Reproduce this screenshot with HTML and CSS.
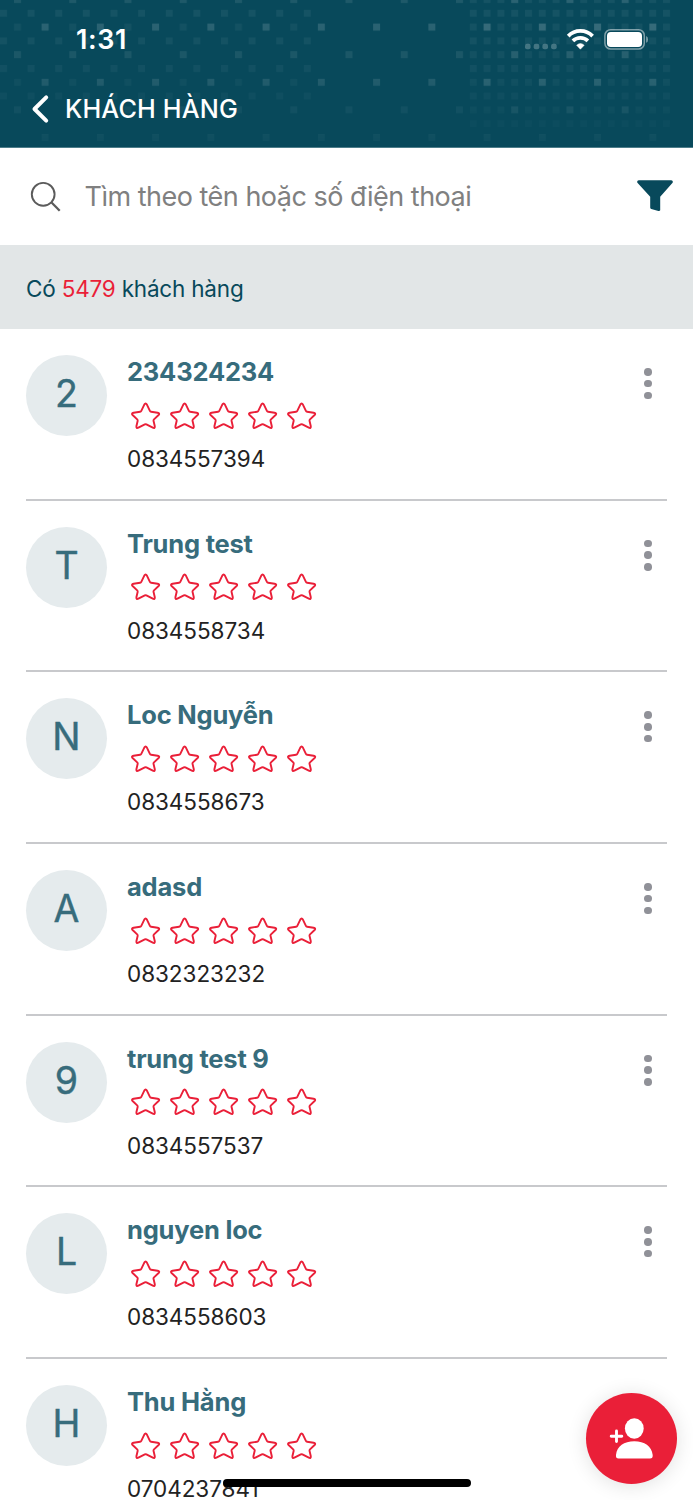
FILE: index.html
```
<!DOCTYPE html>
<html lang="vi">
<head>
<meta charset="utf-8">
<title>Khách hàng</title>
<link rel="stylesheet" href="styles.css">
</head>
<body>
<svg class="defs" width="0" height="0" aria-hidden="true">
  <symbol id="star" viewBox="0 0 31 28">
    <path d="M14.3 2.6Q15.6.4 16.9 2.6L19.9 8.8Q20.3 9.6 21.1 9.7L27.6 10.7Q30.2 11.2 28.6 13L24 17.4Q23.4 18 23.5 18.8L24.8 24.3Q25 26.8 22.8 25.7L16.4 22.4Q15.6 22 14.8 22.4L8.4 25.7Q6.2 26.8 6.4 24.3L7.7 18.8Q7.8 18 7.2 17.4L2.6 13Q1 11.2 3.6 10.7L10.1 9.7Q10.9 9.6 11.3 8.8Z" fill="none" stroke="#ea1f38" stroke-width="1.9" stroke-linejoin="round"/>
  </symbol>
</svg>
<div class="screen">
  <header class="header">
    <svg class="pattern" width="693" height="148" viewBox="0 0 693 148" aria-hidden="true">
      <defs>
        <linearGradient id="fade" x1="0" y1="0" x2="0" y2="1">
          <stop offset="0" stop-color="#fff"/>
          <stop offset=".4" stop-color="#ddd"/>
          <stop offset=".75" stop-color="#777"/>
          <stop offset="1" stop-color="#222"/>
        </linearGradient>
        <mask id="fadeMask"><rect width="693" height="148" fill="url(#fade)"/></mask>
        <pattern id="sparse" x="14" y="-4" width="55.25" height="55.2" patternUnits="userSpaceOnUse">
          <rect width="7" height="7" fill="#fff" opacity=".09"/>
          <rect x="27.6" y="27.6" width="7" height="7" fill="#fff" opacity=".15"/>
        </pattern>
        <pattern id="medium" x="0" y="9.8" width="55.25" height="55.2" patternUnits="userSpaceOnUse">
          <rect width="7" height="7" fill="#fff" opacity=".055"/>
          <rect x="27.6" width="7" height="7" fill="#fff" opacity=".055"/>
          <rect y="27.6" width="7" height="7" fill="#fff" opacity=".055"/>
          <rect x="27.6" y="27.6" width="7" height="7" fill="#fff" opacity=".055"/>
          <rect x="14" y="13.8" width="7" height="7" fill="#fff" opacity=".05"/>
        </pattern>
        <pattern id="dense" x="469.8" y="-4" width="13.8" height="13.8" patternUnits="userSpaceOnUse">
          <rect width="7" height="7" fill="#fff" opacity=".055"/>
        </pattern>
      </defs>
      <g mask="url(#fadeMask)">
        <rect width="670" height="144" fill="url(#sparse)"/>
        <rect width="313" height="100" fill="url(#medium)"/>
        <rect x="469" width="202" height="128" fill="url(#dense)"/>
      </g>
    </svg>
    <div class="status">
      <span class="time">1:31</span>
      <svg class="status-icons" width="126" height="24" viewBox="0 0 126 24">
        <g fill="#fff" opacity=".24"><rect x="1" y="15.7" width="5.6" height="5.6" rx="2"/><rect x="9.7" y="15.7" width="5.6" height="5.6" rx="2"/><rect x="18.4" y="15.7" width="5.6" height="5.6" rx="2"/><rect x="27.1" y="15.7" width="5.6" height="5.6" rx="2"/></g>
        <g fill="none" stroke="#fff" stroke-width="3.7"><path d="M44.2 8.1Q49.2 2.9 56.4 2.9T68.6 8.1"/><path d="M48.9 12.9Q52 9.9 56.4 9.9T63.9 12.9"/></g>
        <path d="M52.6 17.2Q56.4 14 60.2 17.2L56.4 21.2Z" fill="#fff" stroke="#fff" stroke-width=".5"/>
        <rect x="80.9" y="1.7" width="39.4" height="19.4" rx="5.8" fill="none" stroke="#fff" stroke-opacity=".48" stroke-width="1.5"/>
        <rect x="83" y="4" width="35" height="15" rx="3.8" fill="#fff"/>
        <path d="M122.2 8Q124 9 124 11.4T122.2 14.8Z" fill="#fff" opacity=".5"/>
      </svg>
    </div>
    <div class="titlebar">
      <svg width="20" height="32" viewBox="0 0 20 32"><path d="M16.2 4.4 4.5 16 16.2 27.6" fill="none" stroke="#fff" stroke-width="4" stroke-linecap="round" stroke-linejoin="round"/></svg>
      <h1 class="title">KHÁCH HÀNG</h1>
    </div>
  </header>

  <div class="search">
    <svg class="search-icon" width="32" height="32" viewBox="0 0 32 32"><g fill="none" stroke="#5b5b5b" stroke-width="1.9"><circle cx="13.2" cy="13.3" r="11.4"/><path d="M21.3 21.3 29.7 29.7" stroke-width="2.3"/></g></svg>
    <span class="placeholder">Tìm theo tên hoặc số điện thoại</span>
    <svg class="filter" width="36" height="32" viewBox="0 0 36 32"><path d="M1.8.2H34.2Q36.5.7 35.6 2.8L23.2 16.8V30.3Q22.8 31.3 21.4 31L14.3 29Q13.2 28.5 13.2 27.4V16.8L.4 2.8Q-.5.7 1.8.2Z" fill="#08495b"/></svg>
  </div>
  <div class="count">Có <span class="count-number">5479</span> khách hàng</div>

  <main class="list" id="list"></main>

  <button class="fab" aria-label="Thêm khách hàng">
    <svg width="91" height="91" viewBox="0 0 91 91" fill="#fff"><ellipse cx="48.3" cy="35.5" rx="9.4" ry="10.2"/><path d="M30 62C31 53 38 48.3 48.3 48.3S65.6 53 66.7 62Q67 65.6 64 65.6H32.6Q29.6 65.6 30 62Z"/><path d="M30.5 38V48.6M25.2 43.3H35.8" fill="none" stroke="#fff" stroke-width="2.9" stroke-linecap="round"/></svg>
  </button>
  <div class="home-indicator"></div>
</div>
<script src="app.js"></script>
</body>
</html>
```
FILE: styles.css
```
* { box-sizing: border-box; }
body { margin: 0; background: #fff; font-family: Inter, "Noto Sans", sans-serif; }
svg { display: block; flex: none; }
.defs { position: absolute; }
.screen { position: relative; width: 693px; height: 1500px; overflow: hidden; }
.header { position: relative; height: 148px; padding-top: 24px; background: #08495b; border-bottom: 1px solid #4d7d8a; color: #fff; }
.pattern { position: absolute; left: 0; top: 0; }
.status { position: relative; display: flex; justify-content: space-between; height: 32px; padding: 0 43px 0 76px; }
.time { font-size: 27px; font-weight: 600; line-height: 32px; letter-spacing: .6px; }
.status-icons { margin-top: 4px; }
.titlebar { position: relative; display: flex; align-items: center; gap: 15px; height: 32px; margin-top: 37px; padding-left: 30px; }
.title { margin: 0; font-size: 25.2px; font-weight: 500; line-height: 33px; letter-spacing: .15px; }
.search { display: flex; align-items: center; height: 97px; padding: 0 20px 0 30px; }
.search-icon { margin-right: 22.5px; }
.placeholder { flex: 1; color: #808080; font-size: 27px; line-height: 36px; white-space: nowrap; letter-spacing: -.5px; }
.filter { margin-top: -2px; }
.count { height: 84px; padding: 2px 26px 0; background: #e2e6e7; color: #08495b; font-size: 22.5px; line-height: 84px; letter-spacing: -.2px; }
.count-number { color: #ea1f38; }
.list { padding: 0 26px; }
.customer { display: flex; height: 171.67px; padding-top: 26px; border-bottom: 2px solid #c8c9cc; }
.avatar { flex: none; width: 81px; height: 81px; border-radius: 50%; background: #e5ebed; color: #376c7c; font-size: 37.5px; line-height: 78px; text-align: center; -webkit-text-stroke: .4px #376c7c; }
.info { flex: 1; padding: 1px 0 0 20px; }
.name { color: #376c7c; font-size: 25.5px; font-weight: 700; line-height: 32px; white-space: nowrap; letter-spacing: -.2px; }
.stars { display: flex; gap: 7.9px; margin: 13.7px 0 15.3px 3px; }
.phone { color: #222; font-size: 22.5px; line-height: 28px; letter-spacing: -.05px; }
.more { display: flex; flex-direction: column; gap: 4.2px; width: 8px; margin: 13px 14.6px 0 0; }
.dot { width: 7.6px; height: 7.6px; border-radius: 50%; background: #909198; }
.fab { position: absolute; left: 585.5px; top: 1392.5px; width: 91px; height: 91px; padding: 0; border: 0; border-radius: 50%; background: #ea1f38; box-shadow: 0 2px 20px rgba(0, 0, 0, .12); }
.home-indicator { position: absolute; left: 223px; top: 1478.5px; width: 248px; height: 8.5px; border-radius: 5px; background: #000; }
```
FILE: app.js
```
const customers = [
  ["2", "234324234", "0834557394"],
  ["T", "Trung test", "0834558734"],
  ["N", "Loc Nguyễn", "0834558673"],
  ["A", "adasd", "0832323232"],
  ["9", "trung test 9", "0834557537"],
  ["L", "nguyen loc", "0834558603"],
  ["H", "Thu Hằng", "0704237841"]
];
const star = '<svg width="31" height="28"><use href="#star"/></svg>';
document.getElementById("list").innerHTML = customers.map(([initial, name, phone]) => `
  <article class="customer">
    <div class="avatar">${initial}</div>
    <div class="info">
      <div class="name">${name}</div>
      <div class="stars">${star.repeat(5)}</div>
      <div class="phone">${phone}</div>
    </div>
    <div class="more"><i class="dot"></i><i class="dot"></i><i class="dot"></i></div>
  </article>`).join("");
```
